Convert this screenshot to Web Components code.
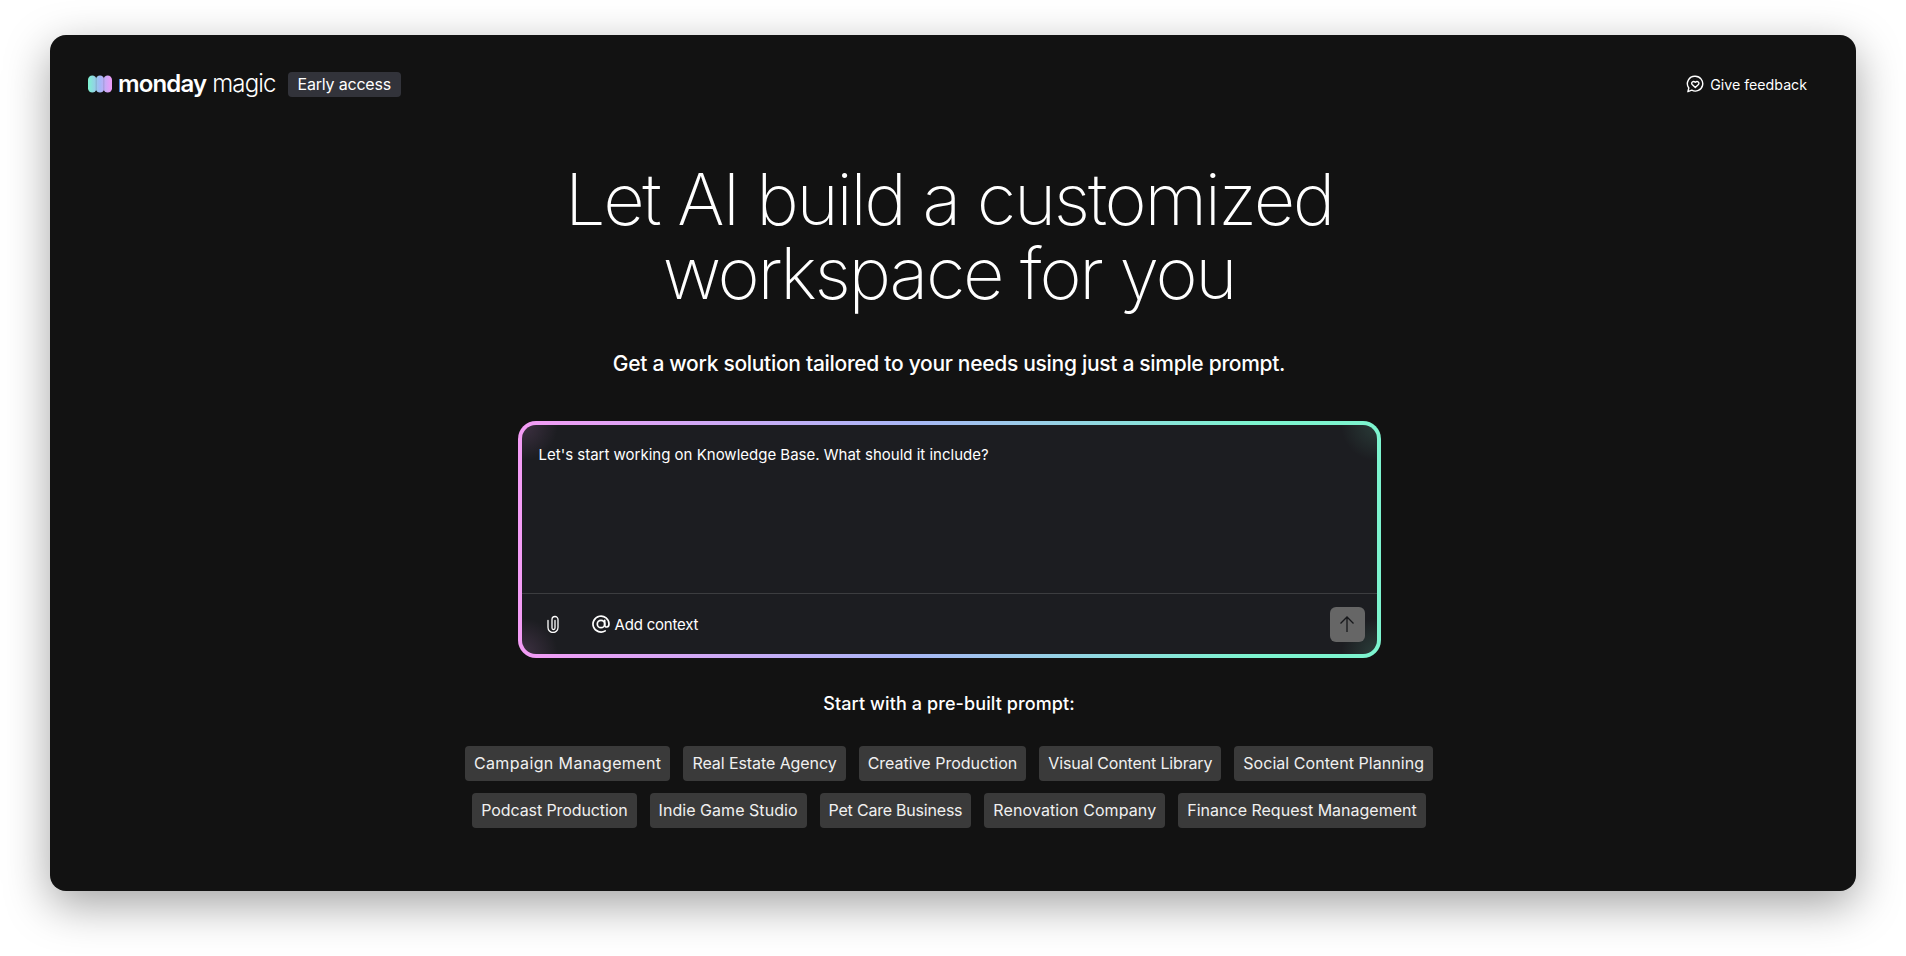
<!DOCTYPE html>
<html>
<head>
<meta charset="utf-8">
<title>monday magic</title>
<style>
    html, body { margin:0; padding:0; background:#fff; }
    body {
        font-family:"Inter","Liberation Sans",sans-serif;
        box-sizing:border-box;
        height:956px;
        padding:35px 50px 65px;
        overflow:hidden;
    }
</style>
</head>
<body>
<magic-window>
    <magic-header slot="header"></magic-header>
    <magic-hero>
        <span slot="title">Let AI build a customized<br>workspace for you</span>
        <span slot="sub">Get a work solution tailored to your needs using just a simple prompt.</span>
    </magic-hero>
    <magic-prompt>Let's start working on Knowledge Base. What should it include?</magic-prompt>
    <magic-chips>
        <span slot="label">Start with a pre-built prompt:</span>
        <magic-chip slot="row1" style="--ls:.38px">Campaign Management</magic-chip>
        <magic-chip slot="row1" style="--ls:-.08px">Real Estate Agency</magic-chip>
        <magic-chip slot="row1">Creative Production</magic-chip>
        <magic-chip slot="row1" style="--ls:-.16px">Visual Content Library</magic-chip>
        <magic-chip slot="row1" style="--ls:.05px">Social Content Planning</magic-chip>
        <magic-chip slot="row2" style="--ls:-.1px">Podcast Production</magic-chip>
        <magic-chip slot="row2" style="--ls:.04px">Indie Game Studio</magic-chip>
        <magic-chip slot="row2" style="--ls:-.21px">Pet Care Business</magic-chip>
        <magic-chip slot="row2" style="--ls:.1px">Renovation Company</magic-chip>
        <magic-chip slot="row2">Finance Request Management</magic-chip>
    </magic-chips>
</magic-window>

<script>
(function(){
    //small helper so every component is declared the same way
    const define = (name, html) => {
        const template = document.createElement('template');
        template.innerHTML = html;
        customElements.define(name, class extends HTMLElement {
            constructor()
            {
                super();
                this.attachShadow({mode:'open'});
                this.shadowRoot.appendChild(template.content.cloneNode(true));
            }
        });
    };

    //the dark app window with its big soft shadow
    define('magic-window', `
    <style>
        :host {
            display:block;
            box-sizing:border-box;
            height:856px;
            background:#121212;
            border-radius:16px;
            box-shadow:0 14px 45px rgba(0,0,0,.36);
            color:#fff;
        }
        .content {
            display:flex;
            flex-direction:column;
            align-items:center;
            padding-right:8px;
        }
    </style>
    <slot name="header"></slot>
    <div class="content"><slot></slot></div>`);

    define('magic-header', `
    <style>
        :host {
            display:flex;
            justify-content:space-between;
            align-items:center;
            height:50px;
            padding:24px 49px 0 38px;
        }
        .brand { display:flex; align-items:center; }
        .brand svg { display:block; margin-right:6px; }
        .word { font-size:24px; line-height:30px; letter-spacing:-.85px; white-space:nowrap; }
        .word b { font-weight:600; }
        .word span { font-weight:300; }
        .badge {
            margin-left:12px;
            height:25px;
            line-height:25px;
            padding:0 10px;
            font-size:16px;
            letter-spacing:-.2px;
            background:#32333a;
            border-radius:4px;
            white-space:nowrap;
        }
        .feedback { display:flex; align-items:center; font-size:14.200px; font-weight:400; white-space:nowrap; }
        .feedback svg { display:block; margin-right:6px; }
    </style>
    <div class="brand">
        <svg width="24" height="18" viewBox="0 0 24 18">
            <defs><linearGradient id="lg" gradientUnits="userSpaceOnUse" x1="0" x2="24" y1="0" y2="0">
                <stop offset="0" stop-color="#7ef3d0"/>
                <stop offset=".5" stop-color="#a4b8f6"/>
                <stop offset="1" stop-color="#f19bf7"/>
            </linearGradient></defs>
            <rect fill="url(#lg)" x="0" y="0.500" width="8.600" height="17" rx="4.300"/>
            <rect fill="url(#lg)" x="7.700" y="0.500" width="8.600" height="17" rx="4.300"/>
            <rect fill="url(#lg)" x="15.400" y="0.500" width="8.600" height="17" rx="4.300"/>
            <path stroke="#121212" stroke-opacity=".18" stroke-width=".8" fill="none" d="M8.150 3v12M15.850 3v12"/>
        </svg>
        <div class="word"><b>monday</b> <span>magic</span></div>
        <div class="badge">Early access</div>
    </div>
    <div class="feedback">
        <svg width="18" height="18" viewBox="0 0 18 18" fill="none" stroke="#fff" stroke-width="1.400">
            <path d="M9.300 1.300a7.400 7.400 0 1 1-3.500 13.900l-3.900 1.500.9-3.700A7.400 7.400 0 0 1 9.300 1.300z" stroke-linejoin="round"/>
            <path d="M9.300 12.500 6.200 9.500c-1.600-1.800.9-4.200 3.100-2.200 2.200-2 4.700.4 3.100 2.200z" stroke-linejoin="round"/>
        </svg>
        Give feedback
    </div>`);

    define('magic-hero', `
    <style>
        :host { display:block; text-align:center; margin-top:53px; }
        .title {
            font-size:72px;
            line-height:74px;
            font-weight:200;
            letter-spacing:-2.3px;
        }
        .sub {
            margin-top:40px;
            font-size:21px;
            line-height:28px;
            font-weight:500;
            letter-spacing:-.3px;
        }
    </style>
    <div class="title"><slot name="title"></slot></div>
    <div class="sub"><slot name="sub"></slot></div>`);

    //prompt box, gradient border goes on the border-box layer
    define('magic-prompt', `
    <style>
        :host {
            display:flex;
            flex-direction:column;
            box-sizing:border-box;
            width:863px;
            height:237px;
            margin-top:43px;
            border:4px solid transparent;
            border-radius:18px;
            background:
                radial-gradient(circle 36px at 0 0, rgba(244,156,245,.16), transparent) padding-box,
                radial-gradient(circle 36px at 0 100%, rgba(244,156,245,.16), transparent) padding-box,
                radial-gradient(circle 36px at 100% 0, rgba(125,245,200,.14), transparent) padding-box,
                radial-gradient(circle 36px at 100% 100%, rgba(125,245,200,.16), transparent) padding-box,
                linear-gradient(#1c1d21,#1c1d21) padding-box,
                linear-gradient(90deg,#f49cf5 0%,#a9b6f6 45%,#7df4cf 85%,#7df4cf 100%) border-box;
        }
        .text {
            flex:1;
            padding:19px 17px 0;
            font-size:15px;
            line-height:22px;
            font-weight:400;
        }
        .bar {
            display:flex;
            align-items:center;
            box-sizing:border-box;
            height:61px;
            border-top:1px solid #3c3d40;
            padding:0 12px 0 25px;
        }
        .bar svg { display:block; }
        .context { display:flex; align-items:center; margin-left:33px; font-size:15px; letter-spacing:-.2px; }
        .context svg { margin-right:5px; }
        .send {
            margin-left:auto;
            width:35px;
            height:35px;
            border-radius:6px;
            background:#666;
            display:flex;
            align-items:center;
            justify-content:center;
        }
    </style>
    <div class="text"><slot></slot></div>
    <div class="bar">
        <svg width="12" height="18" viewBox="0 0 12 18" fill="none" stroke="#fff" stroke-width="1.300" stroke-linecap="round">
            <path d="M1 5.500v7a5 5 0 0 0 10 0V4.500a3 3 0 0 0-6 0v8.500a1.500 1.500 0 0 0 3 0V5.500"/>
        </svg>
        <div class="context">
            <svg width="18" height="18" viewBox="0 0 18 18" fill="none" stroke="#fff" stroke-width="1.700" stroke-linecap="round">
                <circle cx="9" cy="9" r="3.700"/>
                <path d="M12.700 5.300v4.700c0 2.800 4.300 2.800 4.300-1A8 8 0 1 0 13.200 15.900"/>
            </svg>
            Add context
        </div>
        <div class="send">
            <svg width="18" height="20" viewBox="0 0 18 20" fill="none" stroke="#16171a" stroke-width="1.300">
                <path d="M9 18V3M2.500 9.500 9 3l6.500 6.500"/>
            </svg>
        </div>
    </div>`);

    define('magic-chips', `
    <style>
        :host { display:flex; flex-direction:column; align-items:center; margin-top:34px; }
        .label { font-size:18px; line-height:24px; font-weight:500; letter-spacing:.1px; }
        .row { display:flex; gap:13px; justify-content:center; }
        .row.first { margin-top:30px; }
        .row.second { margin-top:12px; }
    </style>
    <div class="label"><slot name="label"></slot></div>
    <div class="row first"><slot name="row1"></slot></div>
    <div class="row second"><slot name="row2"></slot></div>`);

    define('magic-chip', `
    <style>
        :host {
            display:block;
            height:35px;
            line-height:35px;
            padding:0 9px;
            font-size:16px;
            letter-spacing:var(--ls, 0);
            color:#f0f0f0;
            background:#3a3a3a;
            border-radius:4px;
            white-space:nowrap;
        }
    </style>
    <slot></slot>`);
})();
</script>
</body>
</html>
